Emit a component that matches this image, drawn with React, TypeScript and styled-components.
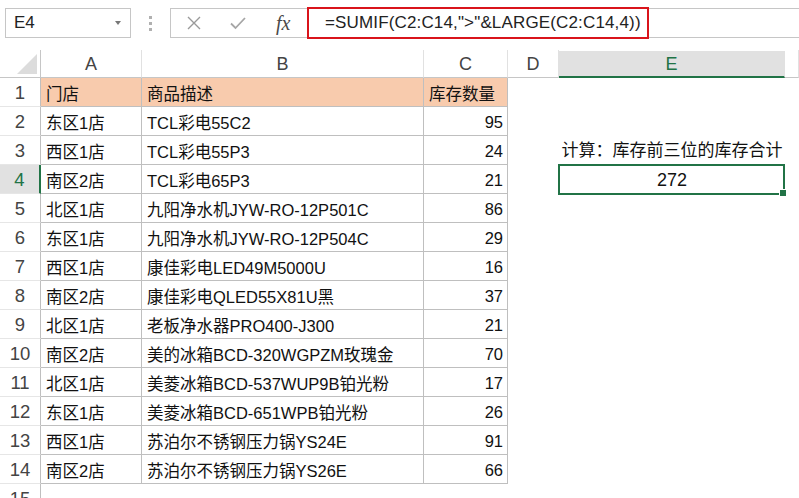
import styled, { createGlobalStyle } from 'styled-components';

const GlobalStyle = createGlobalStyle`
  html, body {
    margin: 0;
    padding: 0;
    background: #fff;
  }
  body {
    font-family: "Liberation Sans", "Noto Sans CJK SC", sans-serif;
    overflow: hidden;
  }
  * {
    box-sizing: border-box;
  }
`;

const GREEN = '#217346';

const Page = styled.div`
  width: 799px;
  height: 498px;
  overflow: hidden;
`;

const Toolbar = styled.div`
  display: flex;
  align-items: flex-start;
  height: 50px;
  padding: 8px 0 0 5px;
`;

const NameBox = styled.div`
  width: 126px;
  height: 30px;
  border: 1px solid #c6c6c6;
  display: flex;
  align-items: center;
  justify-content: space-between;
  padding: 0 9px 0 8px;
  font-size: 17px;
  color: #222;
`;

const DropArrow = styled.span`
  width: 0;
  height: 0;
  border-left: 3px solid transparent;
  border-right: 3px solid transparent;
  border-top: 4px solid #777;
`;

const Grip = styled.div`
  width: 39px;
  height: 30px;
  display: flex;
  flex-direction: column;
  align-items: center;
  justify-content: center;
  gap: 3px;
`;

const Dot = styled.span`
  width: 3px;
  height: 3px;
  background: #b0b0b0;
`;

const FormulaTools = styled.div`
  width: 137px;
  height: 30px;
  border: 1px solid #c6c6c6;
  border-right: none;
  display: flex;
  align-items: center;
  padding-left: 15px;
  gap: 28px;
`;

const ToolIcon = styled.span`
  width: 16px;
  height: 16px;
  display: flex;
  align-items: center;
  justify-content: center;
`;

const Fx = styled.span`
  font-family: "Liberation Serif", serif;
  font-style: italic;
  font-size: 20px;
  color: #4a4a4a;
  margin-left: 2px;
`;

const FormulaInput = styled.div`
  width: 342px;
  height: 32px;
  margin-top: -1px;
  border: 2px solid #d9141b;
  display: flex;
  align-items: center;
  padding-left: 16px;
  font-size: 17px;
  letter-spacing: 0.15px;
  color: #222;
  white-space: pre;
`;

const FormulaRest = styled.div`
  flex: 1;
  height: 30px;
  border-top: 1px solid #c6c6c6;
  border-bottom: 1px solid #c6c6c6;
`;

const Sheet = styled.div`
  display: grid;
  grid-template-columns: 41px 101px 282px 84px 51px 226px 14px;
  grid-template-rows: 28px repeat(15, 29px);
`;

const Corner = styled.div`
  border-right: 1px solid #c6c6c6;
  border-bottom: 1px solid #c6c6c6;
  display: flex;
  align-items: flex-end;
  justify-content: flex-end;
  padding: 0 3px 3px 0;
`;

const ColHead = styled.div<{ $active?: boolean }>`
  display: flex;
  align-items: center;
  justify-content: center;
  padding-top: 2px;
  font-size: 18px;
  color: ${p => (p.$active ? GREEN : '#444')};
  background: ${p => (p.$active ? '#e1e1e1' : '#fff')};
  border-right: 1px solid #e1e1e1;
  border-bottom: ${p => (p.$active ? `2px solid ${GREEN}` : '1px solid #c6c6c6')};
  margin-top: ${p => (p.$active ? '1px' : '0')};
`;

const RowHead = styled.div<{ $active?: boolean }>`
  display: flex;
  align-items: center;
  justify-content: center;
  padding-top: 2px;
  font-size: 18.5px;
  color: ${p => (p.$active ? GREEN : '#444')};
  background: ${p => (p.$active ? '#e1e1e1' : '#fff')};
  border-bottom: 1px solid #e6e6e6;
  border-right: ${p => (p.$active ? `2px solid ${GREEN}` : '1px solid #bfbfbf')};
`;

const Cell = styled.div<{ $fill?: string; $align?: 'left' | 'right' | 'center'; $bordered?: boolean }>`
  display: flex;
  align-items: center;
  justify-content: ${p => (p.$align === 'right' ? 'flex-end' : p.$align === 'center' ? 'center' : 'flex-start')};
  padding: 2px 4px 0 5px;
  font-size: 16.5px;
  color: #111;
  white-space: nowrap;
  background: ${p => p.$fill || 'transparent'};
  border-right: ${p => (p.$bordered ? '1px solid #bfbfbf' : 'none')};
  border-bottom: ${p => (p.$bordered ? '1px solid #bfbfbf' : 'none')};
`;

const Note = styled(Cell)`
  overflow: visible;
  padding: 0 0 4px 0;
  align-items: flex-end;
  font-size: 17px;
`;

const Selected = styled(Cell)`
  position: relative;
  font-size: 18px;
  border: 2px solid ${GREEN};
  margin: -1px 0 -1px -1px;
  &::after {
    content: '';
    position: absolute;
    right: -4px;
    bottom: -4px;
    width: 6px;
    height: 6px;
    background: ${GREEN};
    border: 1px solid #fff;
  }
`;

const header = ['门店', '商品描述', '库存数量'];

const rows: [string, string, number][] = [
  ['东区1店', 'TCL彩电55C2', 95],
  ['西区1店', 'TCL彩电55P3', 24],
  ['南区2店', 'TCL彩电65P3', 21],
  ['北区1店', '九阳净水机JYW-RO-12P501C', 86],
  ['东区1店', '九阳净水机JYW-RO-12P504C', 29],
  ['西区1店', '康佳彩电LED49M5000U', 16],
  ['南区2店', '康佳彩电QLED55X81U黑', 37],
  ['北区1店', '老板净水器PRO400-J300', 21],
  ['南区2店', '美的冰箱BCD-320WGPZM玫瑰金', 70],
  ['北区1店', '美菱冰箱BCD-537WUP9B铂光粉', 17],
  ['东区1店', '美菱冰箱BCD-651WPB铂光粉', 26],
  ['西区1店', '苏泊尔不锈钢压力锅YS24E', 91],
  ['南区2店', '苏泊尔不锈钢压力锅YS26E', 66],
];

function RightCells({ row }: { row: number }) {
  // columns D, E, F
  if (row === 3) {
    return (
      <>
        <Cell />
        <Note $align="center">计算：库存前三位的库存合计</Note>
        <Cell />
      </>
    );
  }
  if (row === 4) {
    return (
      <>
        <Cell />
        <Selected $align="center">272</Selected>
        <Cell />
      </>
    );
  }
  return (
    <>
      <Cell />
      <Cell />
      <Cell />
    </>
  );
}

function Row({ index, data }: { index: number; data: [string, string, number] }) {
  return (
    <>
      <RowHead $active={index === 4}>{index}</RowHead>
      <Cell $bordered>{data[0]}</Cell>
      <Cell $bordered>{data[1]}</Cell>
      <Cell $bordered $align="right">
        {data[2]}
      </Cell>
      <RightCells row={index} />
    </>
  );
}

export default function App() {
  return (
    <Page>
      <GlobalStyle />
      <Toolbar>
        <NameBox>
          E4
          <DropArrow />
        </NameBox>
        <Grip>
          <Dot />
          <Dot />
          <Dot />
        </Grip>
        <FormulaTools>
          <ToolIcon>
            <svg width="14" height="14" viewBox="0 0 14 14">
              <path d="M1 1 L13 13 M13 1 L1 13" stroke="#9a9a9a" strokeWidth="1.4" fill="none" />
            </svg>
          </ToolIcon>
          <ToolIcon>
            <svg width="16" height="14" viewBox="0 0 16 14">
              <path d="M1 7.5 L5.5 12 L15 2" stroke="#a6a6a6" strokeWidth="1.8" fill="none" />
            </svg>
          </ToolIcon>
          <Fx>fx</Fx>
        </FormulaTools>
        <FormulaInput>=SUMIF(C2:C14,"&gt;"&amp;LARGE(C2:C14,4))</FormulaInput>
        <FormulaRest />
      </Toolbar>
      <Sheet>
        <Corner>
          <svg width="20" height="20" viewBox="0 0 20 20">
            <path d="M20 0 L20 20 L0 20 Z" fill="#dcdcdc" />
          </svg>
        </Corner>
        {['A', 'B', 'C', 'D', 'E', ''].map((l, i) => (
          <ColHead key={i} $active={l === 'E'}>
            {l}
          </ColHead>
        ))}

        <RowHead>1</RowHead>
        {header.map(h => (
          <Cell key={h} $fill="#f8cbad" $bordered>
            {h}
          </Cell>
        ))}
        <RightCells row={1} />

        {rows.map((r, i) => (
          <Row key={i} index={i + 2} data={r} />
        ))}

        <RowHead>15</RowHead>
        <Cell />
        <Cell />
        <Cell />
        <Cell />
        <Cell />
        <Cell />
      </Sheet>
    </Page>
  );
}
